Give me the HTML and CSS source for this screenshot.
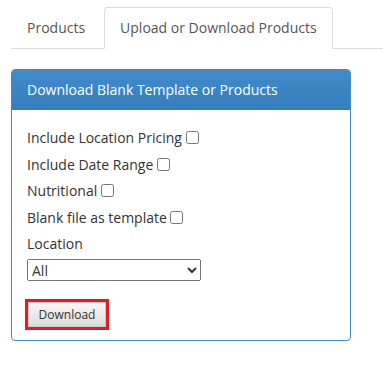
FILE: index.html
```html
<!DOCTYPE html>
<html lang="en">
<head>
  <meta charset="UTF-8" />
  <title>Products</title>
  <link rel="stylesheet" href="styles.css">
</head>
<body>

  <div class="page">
    <ul class="nav-tabs">
      <li><a href="#">Products</a></li>
      <li class="active"><a href="#">Upload or Download Products</a></li>
    </ul>

    <div class="panel">
      <div class="panel-heading">Download Blank Template or Products</div>
      <div class="panel-body">
        <div class="row"><label for="locPricing">Include Location Pricing</label> <input type="checkbox" id="locPricing" /></div>
        <div class="row"><label for="dateRange">Include Date Range</label> <input type="checkbox" id="dateRange" /></div>
        <div class="row"><label for="nutritional">Nutritional</label> <input type="checkbox" id="nutritional" /></div>
        <div class="row"><label for="blankFile">Blank file as template</label> <input type="checkbox" id="blankFile" /></div>
        <div class="row"><label for="location">Location</label></div>
        <select id="location" class="location-select">
          <option>All</option>
        </select>
        <div class="actions">
          <button class="download-btn" type="button">Download</button>
        </div>
      </div>
    </div>
  </div>

</body>
</html>
```

FILE: styles.css
```css
body {
  margin: 0;
  font-family: "Open Sans", Arial, sans-serif;
  font-size: 14px;
  color: #333;
  background-color: #fff;
}

.page {
  padding: 7px 0 0 11px;
}

.nav-tabs {
  list-style: none;
  margin: 0;
  padding: 0;
  display: flex;
  border-bottom: 1px solid #ddd;
}

.nav-tabs li {
  margin-bottom: -1px;
  margin-right: 3px;
}

.nav-tabs a {
  display: block;
  padding: 10px 15px;
  line-height: 20px;
  color: #555;
  text-decoration: none;
  border: 1px solid transparent;
  border-radius: 4px 4px 0 0;
}

.nav-tabs li.active a {
  background-color: #fff;
  border-color: #ddd;
  border-bottom-color: transparent;
}

.panel {
  width: 338px;
  margin-top: 20px;
  border: 1px solid #428bca;
  border-radius: 4px;
  overflow: hidden;
}

.panel-heading {
  padding: 10px 15px;
  font-size: 14px;
  line-height: 20px;
  color: #fff;
  background: linear-gradient(to bottom, #428bca 0%, #357ebd 100%);
}

.panel-body {
  padding: 18px 15px 13px;
}

.row {
  line-height: 20px;
  margin-bottom: 6.5px;
}

.row input {
  margin: 0;
  width: 13px;
  height: 13px;
  vertical-align: -1px;
}

.location-select {
  display: block;
  width: 174px;
  height: 22px;
  margin-top: -2px;
  font-family: "Open Sans", Arial, sans-serif;
  font-size: 14px;
  color: #333;
}

.actions {
  margin-top: 21px;
}

.download-btn {
  font-family: "Open Sans", Arial, sans-serif;
  font-size: 12px;
  color: #333;
  padding: 3px 9px;
  height: 25px;
  width: 78px;
  border: 1px solid #c9c9c9;
  background: linear-gradient(to bottom, #f8f8f8, #dcdcdc);
  outline: 3px solid #e31b23;
  margin-left: 1px;
}
```
